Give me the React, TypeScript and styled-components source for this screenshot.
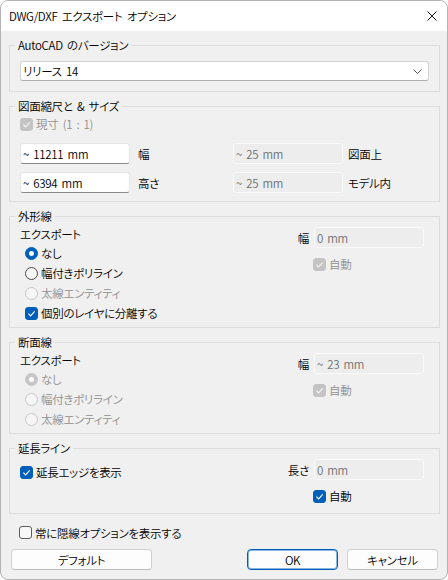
import React from 'react';
import styled, { createGlobalStyle } from 'styled-components';

const BLUE = '#005fb8';

interface CheckProps {
  label: string;
  checked?: boolean;
  disabled?: boolean;
  indent?: number;
}

const CheckMark = ({ color }: { color: string }) => (
  <svg width="13" height="13" viewBox="0 0 13 13">
    <path d="M3.4 6.7 L5.6 8.9 L9.7 4.4" fill="none" stroke={color} strokeWidth="1.1" />
  </svg>
);

const CheckBox: React.FunctionComponent<CheckProps> = ({ label, checked, disabled, indent }) => (
  <OptionRow $indent={indent}>
    <Box $checked={checked} $disabled={disabled}>
      {checked && <CheckMark color={disabled ? '#f4f4f4' : '#ffffff'} />}
    </Box>
    <OptionText $disabled={disabled}>{label}</OptionText>
  </OptionRow>
);

const Radio: React.FunctionComponent<CheckProps> = ({ label, checked, disabled, indent }) => (
  <OptionRow $indent={indent}>
    <Round $checked={checked} $disabled={disabled}>
      {checked && <Dot />}
    </Round>
    <OptionText $disabled={disabled}>{label}</OptionText>
  </OptionRow>
);

interface SideProps {
  label: string;
  value: string;
  auto: boolean;
}

// right-hand column: width / length field with the "auto" box under it
const SideField: React.FunctionComponent<SideProps> = ({ label, value, auto }) => (
  <SideGrid>
    <SideLabel>{label}</SideLabel>
    <Field value={value} disabled readOnly />
    <SideCheck>
      <CheckBox label="自動" checked disabled={!auto} />
    </SideCheck>
  </SideGrid>
);

export default function App() {
  return (
    <>
      <GlobalStyle />
      <Window>
        <TitleBar>
          <Title>DWG/DXF エクスポート オプション</Title>
          <svg width="10" height="10" viewBox="0 0 10 10">
            <path d="M0.5 0.5 L9.5 9.5 M9.5 0.5 L0.5 9.5" stroke="#1a1a1a" strokeWidth="1" />
          </svg>
        </TitleBar>

        <Body>
          <Group $h={54}>
            <Caption>AutoCAD のバージョン</Caption>
            <DropDown>
              <span>リリース 14</span>
              <svg width="9" height="5" viewBox="0 0 9 5">
                <path d="M0.5 0.5 L4.5 4.5 L8.5 0.5" fill="none" stroke="#5a5a5a" strokeWidth="1" />
              </svg>
            </DropDown>
          </Group>

          <Group $h={103}>
            <Caption>図面縮尺と &amp; サイズ</Caption>
            <ScaleBody>
              <CheckBox label="現寸 (1 : 1)" checked disabled />
              <SizeGrid>
                <Field value="~ 11211 mm" readOnly />
                <FieldLabel $pad={8}>幅</FieldLabel>
                <Field value="~ 25 mm" disabled readOnly />
                <FieldLabel $pad={5}>図面上</FieldLabel>
                <Field value="~ 6394 mm" readOnly />
                <FieldLabel $pad={8}>高さ</FieldLabel>
                <Field value="~ 25 mm" disabled readOnly />
                <FieldLabel $pad={5}>モデル内</FieldLabel>
              </SizeGrid>
            </ScaleBody>
          </Group>

          <Group $h={119}>
            <Caption>外形線</Caption>
            <Split>
              <ExportList>
                <ExportHead>エクスポート</ExportHead>
                <Radio label="なし" checked indent={5} />
                <Radio label="幅付きポリライン" indent={5} />
                <Radio label="太線エンティティ" disabled indent={5} />
                <CheckBox label="個別のレイヤに分離する" checked indent={5} />
              </ExportList>
              <SideField label="幅" value="0 mm" auto={false} />
            </Split>
          </Group>

          <Group $h={99}>
            <Caption>断面線</Caption>
            <Split>
              <ExportList>
                <ExportHead>エクスポート</ExportHead>
                <Radio label="なし" checked disabled indent={5} />
                <Radio label="幅付きポリライン" disabled indent={5} />
                <Radio label="太線エンティティ" disabled indent={5} />
              </ExportList>
              <SideField label="幅" value="~ 23 mm" auto={false} />
            </Split>
          </Group>

          <Group $h={73}>
            <Caption>延長ライン</Caption>
            <Split>
              <EdgeList>
                <CheckBox label="延長エッジを表示" checked />
              </EdgeList>
              <SideField label="長さ" value="0 mm" auto />
            </Split>
          </Group>

          <AlwaysRow>
            <CheckBox label="常に隠線オプションを表示する" />
          </AlwaysRow>

          <Footer>
            <Button $w={141}>デフォルト</Button>
            <Spacer />
            <Button $w={91} $primary>
              OK
            </Button>
            <Button $w={91}>キャンセル</Button>
          </Footer>
        </Body>
      </Window>
    </>
  );
}

const GlobalStyle = createGlobalStyle`
  html, body {
    margin: 0;
    padding: 0;
    background: #ffffff;
  }
  *, *::before, *::after {
    box-sizing: border-box;
  }
  body {
    font-family: "Noto Sans CJK JP", "Noto Sans", sans-serif;
    font-size: 12px;
    color: #000;
  }
`;

const Window = styled.div`
  width: 448px;
  height: 580px;
  display: flex;
  flex-direction: column;
  background: #f0f0f0;
  border: 1px solid #b4b4b4;
  border-radius: 8px;
  overflow: hidden;
  font-size: 11.5px;
  font-weight: 350;
  letter-spacing: -0.3px;
  word-spacing: 2px;
  font-feature-settings: 'palt' 1;
`;

const TitleBar = styled.div`
  height: 30px;
  flex: none;
  display: flex;
  align-items: center;
  justify-content: space-between;
  padding: 0 10px 0 8px;
  background: #ffffff;
`;

const Title = styled.span`
  color: #000;
`;

const Body = styled.div`
  display: flex;
  flex-direction: column;
  gap: 7px;
  padding: 7px 7px 0 8px;
`;

const Group = styled.fieldset<{ $h: number }>`
  margin: 0;
  min-width: 0;
  height: ${(p) => p.$h}px;
  padding: 0 10px;
  border: 1px solid #dcdcdc;
`;

const Caption = styled.legend`
  height: 14px;
  margin-left: -5px;
  padding: 0 3px;
  line-height: 14px;
`;

const DropDown = styled.div`
  height: 20px;
  margin-top: 9px;
  display: flex;
  align-items: center;
  justify-content: space-between;
  padding: 0 6px 0 2px;
  background: #ffffff;
  border: 1px solid #d2d2d2;
  border-bottom-color: #b0b0b0;
  border-radius: 3px;
`;

const ScaleBody = styled.div`
  padding-top: 1px;
`;

const SizeGrid = styled.div`
  margin-top: 9px;
  display: grid;
  grid-template-columns: 110px 103px 110px 1fr;
  row-gap: 8px;
  align-items: center;
`;

const Field = styled.input`
  width: 100%;
  height: 21px;
  padding: 0 2px;
  font: inherit;
  letter-spacing: inherit;
  word-spacing: inherit;
  color: #000;
  background: #ffffff;
  border: 1px solid #e6e6e6;
  border-bottom-color: #8a8a8a;
  border-radius: 3px;
  outline: none;

  &:disabled {
    color: #6d6d6d;
    background: #ededed;
    border-color: #fafafa;
  }
`;

const FieldLabel = styled.span<{ $pad: number }>`
  padding-left: ${(p) => p.$pad}px;
`;

const Split = styled.div`
  display: flex;
  justify-content: space-between;
  align-items: flex-start;
`;

const ExportList = styled.div`
  display: flex;
  flex-direction: column;
  padding-top: 3px;
`;

const ExportHead = styled.div`
  height: 17px;
  line-height: 17px;
`;

const EdgeList = styled.div`
  padding-top: 7px;
`;

const SideGrid = styled.div`
  display: grid;
  grid-template-columns: auto 110px;
  column-gap: 5px;
  row-gap: 6px;
  align-items: center;
  padding-top: 4px;
  margin-right: 5px;
`;

const SideLabel = styled.span`
  text-align: right;
`;

const SideCheck = styled.div`
  grid-column: 2;
  margin-left: -1px;
`;

const OptionRow = styled.div<{ $indent?: number }>`
  height: 20px;
  display: flex;
  align-items: center;
  gap: 3px;
  margin-left: ${(p) => p.$indent ?? 0}px;
`;

const OptionText = styled.span<{ $disabled?: boolean }>`
  color: ${(p) => (p.$disabled ? '#8f8f8f' : '#000')};
  white-space: nowrap;
`;

const Box = styled.span<{ $checked?: boolean; $disabled?: boolean }>`
  width: 13px;
  height: 13px;
  flex: none;
  display: flex;
  border-radius: 3px;
  border: 1px solid
    ${(p) => (p.$checked ? (p.$disabled ? '#c4c4c4' : BLUE) : '#5c5c5c')};
  background: ${(p) => (p.$checked ? (p.$disabled ? '#c4c4c4' : BLUE) : '#f7f7f7')};

  svg {
    margin: -1px;
  }
`;

const Round = styled.span<{ $checked?: boolean; $disabled?: boolean }>`
  width: 13px;
  height: 13px;
  flex: none;
  display: flex;
  align-items: center;
  justify-content: center;
  border-radius: 50%;
  border: 1px solid
    ${(p) => (p.$disabled ? '#c6c6c6' : p.$checked ? BLUE : '#474747')};
  background: ${(p) => (p.$checked ? (p.$disabled ? '#c6c6c6' : BLUE) : '#f6f6f6')};
`;

const Dot = styled.span`
  width: 5px;
  height: 5px;
  border-radius: 50%;
  background: #ffffff;
`;

const AlwaysRow = styled.div`
  margin: 2px 0 0 10px;
  height: 19px;
  display: flex;
  align-items: center;
`;

const Footer = styled.div`
  display: flex;
  gap: 9px;
  padding: 0 2px;
`;

const Spacer = styled.div`
  flex: 1;
`;

const Button = styled.button<{ $w: number; $primary?: boolean }>`
  width: ${(p) => p.$w}px;
  height: 21px;
  padding: 0;
  font: inherit;
  letter-spacing: inherit;
  word-spacing: inherit;
  color: #000;
  background: #fdfdfd;
  border: 1px solid ${(p) => (p.$primary ? BLUE : '#d0d0d0')};
  border-bottom-color: ${(p) => (p.$primary ? BLUE : '#bcbcbc')};
  border-radius: 4px;
  box-shadow: ${(p) => (p.$primary ? `inset 0 0 0 1px rgba(0, 95, 184, 0.45)` : 'none')};
`;
